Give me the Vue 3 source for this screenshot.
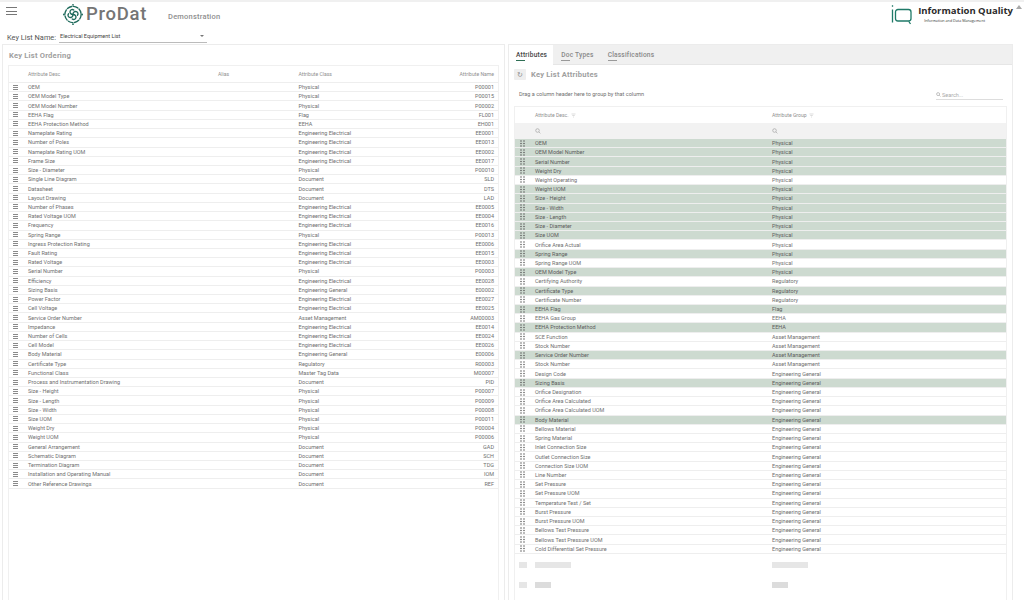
<script setup>
const leftRows = [
  ['OEM', 'Physical', 'P00001'], ['OEM Model Type', 'Physical', 'P00015'], ['OEM Model Number', 'Physical', 'P00002'],
  ['EEHA Flag', 'Flag', 'FL001'], ['EEHA Protection Method', 'EEHA', 'EH001'], ['Nameplate Rating', 'Engineering Electrical', 'EE0001'],
  ['Number of Poles', 'Engineering Electrical', 'EE0013'], ['Nameplate Rating UOM', 'Engineering Electrical', 'EE0002'],
  ['Frame Size', 'Engineering Electrical', 'EE0017'], ['Size - Diameter', 'Physical', 'P00010'], ['Single Line Diagram', 'Document', 'SLD'],
  ['Datasheet', 'Document', 'DTS'], ['Layout Drawing', 'Document', 'LAD'], ['Number of Phases', 'Engineering Electrical', 'EE0005'],
  ['Rated Voltage UOM', 'Engineering Electrical', 'EE0004'], ['Frequency', 'Engineering Electrical', 'EE0016'], ['Spring Range', 'Physical', 'P00013'],
  ['Ingress Protection Rating', 'Engineering Electrical', 'EE0006'], ['Fault Rating', 'Engineering Electrical', 'EE0015'],
  ['Rated Voltage', 'Engineering Electrical', 'EE0003'], ['Serial Number', 'Physical', 'P00003'], ['Efficiency', 'Engineering Electrical', 'EE0028'],
  ['Sizing Basis', 'Engineering General', 'E00002'], ['Power Factor', 'Engineering Electrical', 'EE0027'], ['Cell Voltage', 'Engineering Electrical', 'EE0025'],
  ['Service Order Number', 'Asset Management', 'AM00003'], ['Impedance', 'Engineering Electrical', 'EE0014'], ['Number of Cells', 'Engineering Electrical', 'EE0024'],
  ['Cell Model', 'Engineering Electrical', 'EE0026'], ['Body Material', 'Engineering General', 'E00006'], ['Certificate Type', 'Regulatory', 'R00003'],
  ['Functional Class', 'Master Tag Data', 'M00007'], ['Process and Instrumentation Drawing', 'Document', 'PID'], ['Size - Height', 'Physical', 'P00007'],
  ['Size - Length', 'Physical', 'P00009'], ['Size - Width', 'Physical', 'P00008'], ['Size UOM', 'Physical', 'P00011'], ['Weight Dry', 'Physical', 'P00004'],
  ['Weight UOM', 'Physical', 'P00006'], ['General Arrangement', 'Document', 'GAD'], ['Schematic Diagram', 'Document', 'SCH'],
  ['Termination Diagram', 'Document', 'TDG'], ['Installation and Operating Manual', 'Document', 'IOM'], ['Other Reference Drawings', 'Document', 'REF']
];

// third value marks the rows already picked for the key list
const rightRows = [
  ['OEM', 'Physical', 1], ['OEM Model Number', 'Physical', 1], ['Serial Number', 'Physical', 1], ['Weight Dry', 'Physical', 1],
  ['Weight Operating', 'Physical', 0], ['Weight UOM', 'Physical', 1], ['Size - Height', 'Physical', 1], ['Size - Width', 'Physical', 1],
  ['Size - Length', 'Physical', 1], ['Size - Diameter', 'Physical', 1], ['Size UOM', 'Physical', 1], ['Orifice Area Actual', 'Physical', 0],
  ['Spring Range', 'Physical', 1], ['Spring Range UOM', 'Physical', 0], ['OEM Model Type', 'Physical', 1], ['Certifying Authority', 'Regulatory', 0],
  ['Certificate Type', 'Regulatory', 1], ['Certificate Number', 'Regulatory', 0], ['EEHA Flag', 'Flag', 1], ['EEHA Gas Group', 'EEHA', 0],
  ['EEHA Protection Method', 'EEHA', 1], ['SCE Function', 'Asset Management', 0], ['Stock Number', 'Asset Management', 0],
  ['Service Order Number', 'Asset Management', 1], ['Stock Number', 'Asset Management', 0], ['Design Code', 'Engineering General', 0],
  ['Sizing Basis', 'Engineering General', 1], ['Orifice Designation', 'Engineering General', 0], ['Orifice Area Calculated', 'Engineering General', 0],
  ['Orifice Area Calculated UOM', 'Engineering General', 0], ['Body Material', 'Engineering General', 1], ['Bellows Material', 'Engineering General', 0],
  ['Spring Material', 'Engineering General', 0], ['Inlet Connection Size', 'Engineering General', 0], ['Outlet Connection Size', 'Engineering General', 0],
  ['Connection Size UOM', 'Engineering General', 0], ['Line Number', 'Engineering General', 0], ['Set Pressure', 'Engineering General', 0],
  ['Set Pressure UOM', 'Engineering General', 0], ['Temperature Test / Set', 'Engineering General', 0], ['Burst Pressure', 'Engineering General', 0],
  ['Burst Pressure UOM', 'Engineering General', 0], ['Bellows Test Pressure', 'Engineering General', 0], ['Bellows Test Pressure UOM', 'Engineering General', 0],
  ['Cold Differential Set Pressure', 'Engineering General', 0]
];

const dots = [[1, 1], [4, 1], [1, 3.5], [4, 3.5], [1, 6], [4, 6]];
</script>

<template>
<div class="page">
  <div class="main">
    <header class="top">
      <div class="burger"><span></span><span></span><span></span></div>
      <div class="brand">
        <svg class="swirl" viewBox="0 0 40 44" fill="none" stroke="#1f6b5c" stroke-width="2.6" stroke-linecap="round">
          <circle cx="20" cy="22" r="15.5" stroke-dasharray="9 3.2" />
          <path d="M20 22c0-4 3-6.5 6.5-5.5 3 .9 4 4.5 2 7" />
          <path d="M20 22c4 0 6.5 3 5.5 6.5-.9 3-4.5 4-7 2" />
          <path d="M20 22c0 4-3 6.5-6.5 5.5-3-.9-4-4.5-2-7" />
          <path d="M20 22c-4 0-6.5-3-5.5-6.5.9-3 4.5-4 7-2" />
          <circle cx="20" cy="3.5" r="1.7" fill="#1f6b5c" stroke="none" />
          <circle cx="20" cy="40.5" r="1.7" fill="#1f6b5c" stroke="none" />
          <circle cx="2.5" cy="22" r="1.7" fill="#1f6b5c" stroke="none" />
          <circle cx="37.5" cy="22" r="1.7" fill="#1f6b5c" stroke="none" />
        </svg>
        <span class="pro">ProDat</span>
      </div>
      <span class="demo">Demonstration</span>
      <div class="iq">
        <svg class="iq-mark" viewBox="0 0 21 21" fill="none" stroke="#1f7a68" stroke-width="1.3">
          <path d="M1.5 1.3v1.4M1.5 5.5v13" />
          <path d="M17 17H7a2.5 2.5 0 0 1-2.5-2.5V8A2.5 2.5 0 0 1 7 5.5h10.5A2.5 2.5 0 0 1 20 8v6.5a2.5 2.5 0 0 1-2.5 2.5l2 3" />
        </svg>
        <div class="iq-text">
          <div class="iq-name">Information Quality</div>
          <div class="iq-sub">Information and Data Management</div>
        </div>
      </div>
    </header>

    <div class="key-row">
      <label>Key List Name:</label>
      <div class="select">
        <span>Electrical Equipment List</span>
        <i class="caret"></i>
      </div>
    </div>

    <div class="panels">
      <section class="panel left">
        <h2 class="title ordering">Key List Ordering</h2>
        <div class="table">
          <div class="l-grid head">
            <span></span><span>Attribute Desc</span><span>Alias</span><span>Attribute Class</span><span class="end">Attribute Name</span>
          </div>
          <div v-for="row in leftRows" :key="row[2]" class="l-grid row">
            <span class="bars"><b></b><b></b><b></b></span>
            <span>{{ row[0] }}</span>
            <span></span>
            <span>{{ row[1] }}</span>
            <span class="end">{{ row[2] }}</span>
          </div>
        </div>
      </section>

      <section class="panel right">
        <nav class="tabs">
          <a class="tab active">Attributes</a>
          <a class="tab">Doc Types</a>
          <a class="tab">Classifications</a>
        </nav>
        <div class="title-row">
          <button class="refresh">↻</button>
          <h2 class="title">Key List Attributes</h2>
        </div>
        <div class="group-row">
          <span>Drag a column header here to group by that column</span>
          <div class="search">
            <svg viewBox="0 0 10 10" fill="none" stroke="#888" stroke-width="1"><circle cx="4.2" cy="4.2" r="3" /><path d="M6.5 6.5l2.5 2.5" /></svg>
            <span>Search...</span>
          </div>
        </div>
        <div class="table attr">
          <div class="r-grid head">
            <span></span>
            <span>Attribute Desc. <svg class="funnel" viewBox="0 0 10 10" fill="none" stroke="#aaa" stroke-width=".8"><path d="M1 2h8M2.5 5h5M4 8h2" /></svg></span>
            <span>Attribute Group <svg class="funnel" viewBox="0 0 10 10" fill="none" stroke="#aaa" stroke-width=".8"><path d="M1 2h8M2.5 5h5M4 8h2" /></svg></span>
          </div>
          <div class="r-grid filter">
            <span></span>
            <svg viewBox="0 0 10 10" fill="none" stroke="#999" stroke-width="1"><circle cx="4.2" cy="4.2" r="3" /><path d="M6.5 6.5l2.5 2.5" /></svg>
            <svg viewBox="0 0 10 10" fill="none" stroke="#999" stroke-width="1"><circle cx="4.2" cy="4.2" r="3" /><path d="M6.5 6.5l2.5 2.5" /></svg>
          </div>
          <div v-for="(row, i) in rightRows" :key="i" class="r-grid row" :class="{ picked: row[2] }">
            <svg class="dots" viewBox="0 0 5 7" fill="#555"><circle v-for="d in dots" :key="d.join()" :cx="d[0]" :cy="d[1]" r=".75" /></svg>
            <span>{{ row[0] }}</span>
            <span>{{ row[1] }}</span>
          </div>
          <div class="r-grid skeleton first">
            <i class="ph handle"></i><i class="ph long"></i><i class="ph long"></i>
          </div>
          <div class="r-grid skeleton">
            <i class="ph handle"></i><i class="ph short"></i><i class="ph short"></i>
          </div>
        </div>
      </section>
    </div>
  </div>
  <div class="scrollbar"><i></i></div>
</div>
</template>

<style>
html, body { margin: 0; overflow: hidden; background: #fff; }
</style>

<style scoped>
.page {
  width: 1024px;
  height: 600px;
  display: flex;
  overflow: hidden;
  font-family: Roboto, "Liberation Sans", sans-serif;
  color: #707070;
  background: #fff;
}
.main {
  flex: 1;
  min-width: 0;
  display: flex;
  flex-direction: column;
  border-top: 2px solid #f0f0f0;
}
.scrollbar {
  width: 11px;
  border-top: 2px solid #f0f0f0;
  flex: none;
}
.scrollbar i {
  display: block;
  width: 0;
  margin: 3px 0 0 3px;
  border: 3px solid transparent;
  border-top: 0;
  border-bottom: 4px solid #a8a8a8;
}

.top {
  height: 28px;
  display: flex;
  align-items: flex-start;
  flex: none;
}
.burger {
  width: 11px;
  margin: 5px 0 0 6px;
  display: flex;
  flex-direction: column;
  gap: 2.5px;
}
.burger span { height: 1px; background: #777; }
.brand {
  display: flex;
  align-items: center;
  margin-left: 45px;
  height: 24px;
}
.swirl { width: 22px; height: 23px; }
.pro {
  margin-left: 2px;
  font-size: 18.5px;
  line-height: 24px;
  font-weight: 500;
  letter-spacing: .7px;
  color: #757575;
}
.demo {
  margin: 10px 0 0 21px;
  font-size: 7.5px;
  font-weight: 500;
  color: #8f8f8f;
  letter-spacing: .2px;
}
.iq {
  margin-left: auto;
  display: flex;
  gap: 6px;
  margin-top: 2px;
}
.iq-mark { width: 21px; height: 21px; }
.iq-name {
  font-family: "Open Sans", sans-serif;
  font-size: 9.5px;
  font-weight: 700;
  line-height: 12px;
  margin-top: 1px;
  color: #2b2b2b;
  white-space: nowrap;
}
.iq-sub {
  font-family: "Open Sans", sans-serif;
  font-size: 3.7px;
  line-height: 6px;
  margin: 1px 0 0 6px;
  color: #333;
  white-space: nowrap;
}

.key-row {
  height: 14px;
  display: flex;
  align-items: center;
  padding-left: 7px;
  flex: none;
}
.key-row label { font-size: 7.4px; color: #555; width: 52px; white-space: nowrap; }
.select {
  width: 148px;
  height: 9px;
  display: flex;
  align-items: center;
  justify-content: space-between;
  box-sizing: content-box;
  border-bottom: 1px solid #bbb;
  font-size: 5.5px;
  color: #444;
  padding-bottom: 1px;
}
.select span { padding-left: 1px; }
.caret {
  margin-right: 3px;
  border: 2px solid transparent;
  border-top: 2.5px solid #777;
  border-bottom: 0;
}

.panels {
  flex: 1;
  min-height: 0;
  display: flex;
  gap: 3px;
  padding-left: 2px;
}
.panel {
  box-sizing: border-box;
  border: 1px solid #ececec;
  border-bottom: 0;
}
.left { width: 503px; padding: 0 5px; }
.right { width: 505px; }
.title {
  margin: 0;
  font-size: 7.6px;
  font-weight: 700;
  color: #a0a0a0;
  letter-spacing: .2px;
}
.ordering { height: 20px; line-height: 21px; padding-left: 1px; }

.table {
  border: 1px solid #f0f0f0;
  border-bottom: 0;
  height: 600px;
  font-size: 5.5px;
}
.head {
  height: 17px;
  align-items: center;
  font-size: 5.1px;
  color: #8f8f8f;
  border-bottom: 1px solid #eee;
  box-sizing: border-box;
}
.row {
  height: 9.22px;
  line-height: 8px;
  align-items: center;
  border-bottom: 1px solid #eee;
  box-sizing: border-box;
  white-space: nowrap;
}
.l-grid {
  display: grid;
  grid-template-columns: 19px 190px 80.5px 1fr 60px;
}
.end { text-align: right; padding-right: 4px; }
.bars {
  display: flex;
  flex-direction: column;
  gap: 1px;
  width: 5px;
  margin-left: 4px;
}
.bars b { height: 1px; background: #8a8a8a; }

.tabs {
  height: 20px;
  display: flex;
  background: #f0f0f0;
  border-bottom: 1px solid #e6e6e6;
  box-sizing: border-box;
}
.tab {
  position: relative;
  padding: 0 7px;
  font-size: 6.6px;
  font-weight: 500;
  line-height: 20px;
  letter-spacing: .2px;
  color: #888;
}
.tab::after {
  content: "";
  position: absolute;
  left: 7px;
  bottom: 3px;
  width: 9px;
  height: 1px;
  background: #999;
}
.tab.active {
  background: #fff;
  color: #444;
  padding: 0 6px 0 7px;
  height: 20px;
  margin-right: 8px;
}
.tab.active::after { background: #2f6f55; height: 1.5px; bottom: 4px; }
.tab.active + .tab { padding-left: 0; }
.tab.active + .tab::after { left: 0; }
.title-row {
  height: 19px;
  display: flex;
  align-items: center;
  gap: 5px;
  padding-left: 5px;
}
.refresh {
  width: 12px;
  height: 11px;
  padding: 0;
  border: 0;
  border-radius: 1px;
  background: #eee;
  color: #888;
  font-size: 7px;
  line-height: 11px;
}
.group-row {
  height: 20px;
  display: flex;
  align-items: center;
  justify-content: space-between;
  padding: 0 9px 0 10px;
  font-size: 5.5px;
}
.search {
  width: 67px;
  height: 9px;
  display: flex;
  align-items: center;
  gap: 1px;
  border-bottom: 1px solid #ddd;
  color: #aaa;
  margin-top: 2px;
}
.search svg { width: 5px; height: 5px; }
.attr { margin: 2px 5px 0 5px; }
.r-grid {
  display: grid;
  grid-template-columns: 20px 237px 1fr;
}
.attr .head { height: 16px; border-bottom: 0; }
.funnel { width: 5px; height: 5px; vertical-align: -1px; margin-left: 1px; }
.filter {
  height: 16px;
  align-items: center;
  background: #f2f2f2;
}
.filter svg { width: 6px; height: 6px; }
.picked { background: #cddad0; color: #5c5c5c; }
.dots { width: 5px; height: 7px; margin-left: 5px; }
.skeleton {
  height: 20px;
  align-items: center;
}
.skeleton.first { margin-top: 1px; }
.ph { display: block; height: 6px; background: #e6e6e6; }
.ph.handle { width: 8px; margin-left: 4px; }
.ph.long { width: 36px; }
.ph.short { width: 16px; background: #dcdcdc; }
</style>
